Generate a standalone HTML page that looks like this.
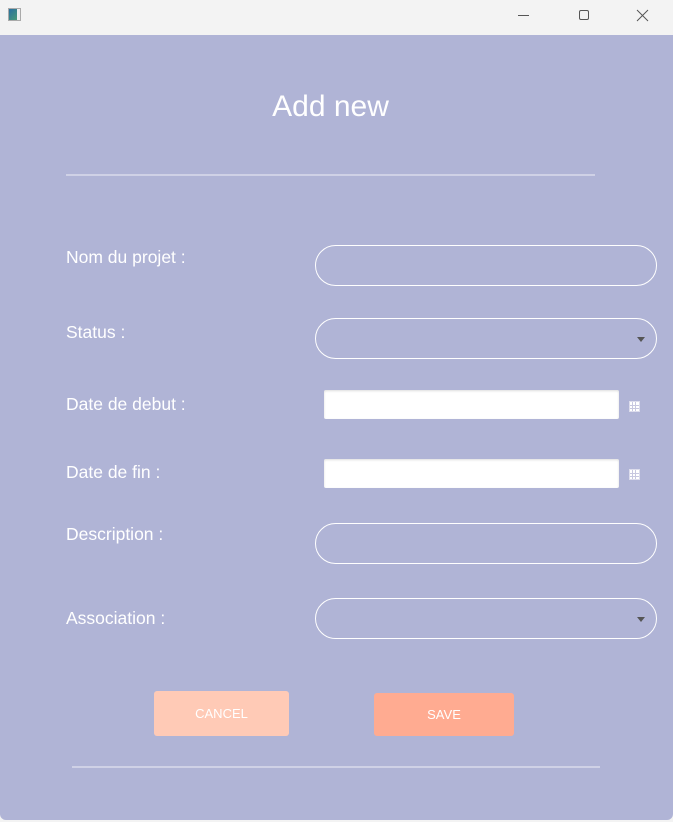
<!DOCTYPE html>
<html><head><style>
body{margin:0;width:673px;height:822px;background:#f3f3f3;font-family:"Liberation Sans",sans-serif;position:relative;overflow:hidden}
.bar{position:absolute;left:0;top:0;width:673px;height:35px;background:#f3f3f3}
.main{position:absolute;left:0;top:35px;width:673px;height:785px;background:#b0b4d6;border-radius:0 0 6px 6px}
.a{position:absolute}
.lbl{position:absolute;left:66px;color:#fff;font-size:17.5px}
.pill{position:absolute;left:315px;width:340px;height:39px;border:1.5px solid #fff;border-radius:21px}
.date{position:absolute;left:324px;width:295px;height:29px;background:#fff;border-radius:2px;box-shadow:inset 0 1px 2px #ddd}
.cal{position:absolute;left:629px;width:11px;height:11px;background:#fff;border:1px solid #dcdcec;box-sizing:border-box;
background-image:linear-gradient(90deg,transparent 2px,#c8c8e0 2px,#c8c8e0 3px,transparent 3px,transparent 5px,#c8c8e0 5px,#c8c8e0 6px,transparent 6px),linear-gradient(transparent 3px,#c8c8e0 3px,#c8c8e0 4px,transparent 4px,transparent 6px,#c8c8e0 6px,#c8c8e0 7px,transparent 7px)}
.arr{position:absolute;left:637px;width:0;height:0;border-left:4px solid transparent;border-right:4px solid transparent;border-top:5px solid #555}
.line{position:absolute;height:2px;background:#cfd1e6}
.btn{position:absolute;color:#fff;font-size:13px;text-align:center;border-radius:3px}
</style></head><body>
<div class="bar">
<div class="a" style="left:8px;top:8px;width:13px;height:13px;border:1px solid #aaa;background:linear-gradient(135deg,#2a6fa0,#4ea070);box-sizing:border-box"></div>
<div class="a" style="left:17px;top:9px;width:3px;height:11px;background:#eee"></div>
<div class="a" style="left:518px;top:15px;width:11px;height:1px;background:#555"></div>
<div class="a" style="left:579px;top:10px;width:10px;height:10px;border:1px solid #555;border-radius:2px;box-sizing:border-box"></div>
<svg class="a" style="left:636px;top:9px" width="13" height="13"><path d="M1 1L12 12M12 1L1 12" stroke="#555" stroke-width="1"/></svg>
</div>
<div class="main"></div>
<div class="a" style="left:0;width:673px;top:90px;text-align:center;color:#fff;font-size:30px"><span style="position:relative;left:-6px">Add new</span></div>
<div class="line" style="left:66px;top:174px;width:529px"></div>
<div class="lbl" style="top:247px">Nom du projet :</div>
<div class="pill" style="top:245px"></div>
<div class="lbl" style="top:322px">Status :</div>
<div class="pill" style="top:318px"></div><div class="arr" style="top:337px"></div>
<div class="lbl" style="top:394px">Date de debut :</div>
<div class="date" style="top:390px"></div><div class="cal" style="top:401px"></div>
<div class="lbl" style="top:462px">Date de fin :</div>
<div class="date" style="top:459px"></div><div class="cal" style="top:469px"></div>
<div class="lbl" style="top:524px">Description :</div>
<div class="pill" style="top:523px"></div>
<div class="lbl" style="top:608px">Association :</div>
<div class="pill" style="top:598px"></div><div class="arr" style="top:617px"></div>
<div class="btn" style="left:154px;top:691px;width:135px;height:45px;line-height:45px;background:#ffcab6">CANCEL</div>
<div class="btn" style="left:374px;top:693px;width:140px;height:43px;line-height:43px;background:#ffab91">SAVE</div>
<div class="line" style="left:72px;top:766px;width:528px"></div>
</body></html>
